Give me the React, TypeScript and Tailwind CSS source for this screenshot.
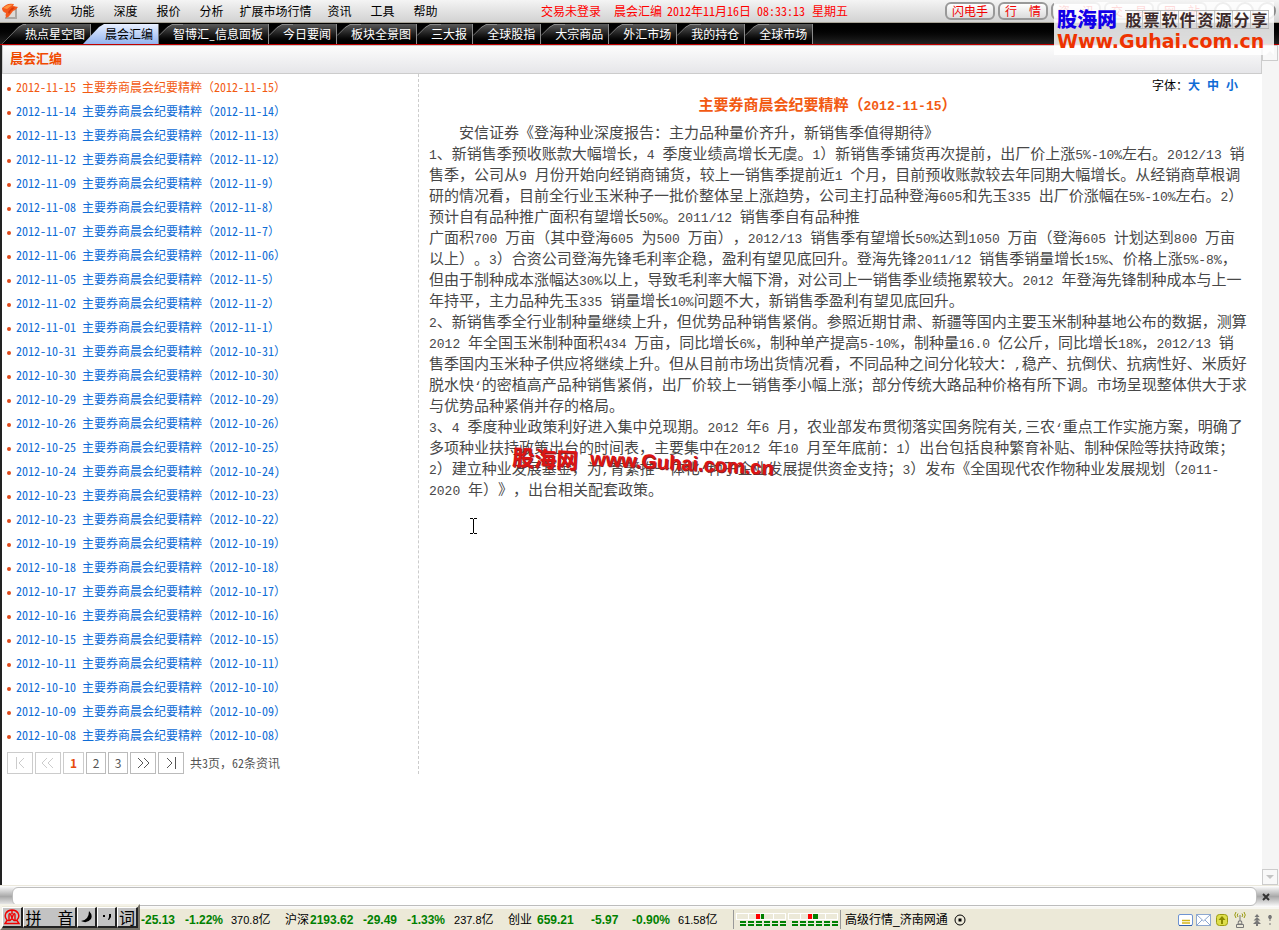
import React, { Fragment, useState } from "react";

const menus = ["系统", "功能", "深度", "报价", "分析", "扩展市场行情", "资讯", "工具", "帮助"];

const tabs = [
  "热点星空图",
  "晨会汇编",
  "智博汇_信息面板",
  "今日要闻",
  "板块全景图",
  "三大报",
  "全球股指",
  "大宗商品",
  "外汇市场",
  "我的持仓",
  "全球市场",
];

const news: [string, string][] = [
  ["2012-11-15", "（2012-11-15）"],
  ["2012-11-14", "（2012-11-14）"],
  ["2012-11-13", "（2012-11-13）"],
  ["2012-11-12", "（2012-11-12）"],
  ["2012-11-09", "（2012-11-9）"],
  ["2012-11-08", "（2012-11-8）"],
  ["2012-11-07", "（2012-11-7）"],
  ["2012-11-06", "（2012-11-06）"],
  ["2012-11-05", "（2012-11-5）"],
  ["2012-11-02", "（2012-11-2）"],
  ["2012-11-01", "（2012-11-1）"],
  ["2012-10-31", "（2012-10-31）"],
  ["2012-10-30", "（2012-10-30）"],
  ["2012-10-29", "（2012-10-29）"],
  ["2012-10-26", "（2012-10-26）"],
  ["2012-10-25", "（2012-10-25）"],
  ["2012-10-24", "（2012-10-24)"],
  ["2012-10-23", "（2012-10-23）"],
  ["2012-10-23", "（2012-10-22）"],
  ["2012-10-19", "（2012-10-19）"],
  ["2012-10-18", "（2012-10-18）"],
  ["2012-10-17", "（2012-10-17）"],
  ["2012-10-16", "（2012-10-16）"],
  ["2012-10-15", "（2012-10-15）"],
  ["2012-10-11", "（2012-10-11）"],
  ["2012-10-10", "（2012-10-10）"],
  ["2012-10-09", "（2012-10-09）"],
  ["2012-10-08", "（2012-10-08）"],
];

const article: string[][] = [
  ["　　安信证券《登海种业深度报告：主力品种量价齐升，新销售季值得期待》"],
  [
    "1、新销售季预收账款大幅增长，4 季度业绩高增长无虞。1）新销售季铺货再次提前，出厂价上涨5%-10%左右。2012/13 销",
    "售季，公司从9 月份开始向经销商铺货，较上一销售季提前近1 个月，目前预收账款较去年同期大幅增长。从经销商草根调",
    "研的情况看，目前全行业玉米种子一批价整体呈上涨趋势，公司主打品种登海605和先玉335 出厂价涨幅在5%-10%左右。2）",
    "预计自有品种推广面积有望增长50%。2011/12 销售季自有品种推",
    "广面积700 万亩（其中登海605 为500 万亩），2012/13 销售季有望增长50%达到1050 万亩（登海605 计划达到800 万亩",
    "以上）。3）合资公司登海先锋毛利率企稳，盈利有望见底回升。登海先锋2011/12 销售季销量增长15%、价格上涨5%-8%，",
    "但由于制种成本涨幅达30%以上，导致毛利率大幅下滑，对公司上一销售季业绩拖累较大。2012 年登海先锋制种成本与上一",
    "年持平，主力品种先玉335 销量增长10%问题不大，新销售季盈利有望见底回升。",
  ],
  [
    "2、新销售季全行业制种量继续上升，但优势品种销售紧俏。参照近期甘肃、新疆等国内主要玉米制种基地公布的数据，测算",
    "2012 年全国玉米制种面积434 万亩，同比增长6%，制种单产提高5-10%，制种量16.0 亿公斤，同比增长18%，2012/13 销",
    "售季国内玉米种子供应将继续上升。但从目前市场出货情况看，不同品种之间分化较大：,稳产、抗倒伏、抗病性好、米质好",
    "脱水快‘的密植高产品种销售紧俏，出厂价较上一销售季小幅上涨；部分传统大路品种价格有所下调。市场呈现整体供大于求",
    "与优势品种紧俏并存的格局。",
  ],
  [
    "3、4 季度种业政策利好进入集中兑现期。2012 年6 月，农业部发布贯彻落实国务院有关,三农‘重点工作实施方案，明确了",
    "多项种业扶持政策出台的时间表，主要集中在2012 年10 月至年底前：1）出台包括良种繁育补贴、制种保险等扶持政策；",
    "2）建立种业发展基金，为,育繁推一体化‘种子企业发展提供资金支持；3）发布《全国现代农作物种业发展规划（2011-",
    "2020 年）》，出台相关配套政策。",
  ],
];

/* Sets runs of half-width characters in their own face or glyph variant. */
function Runs({ text, className }: { text: string; className: string }) {
  return (
    <>
      {text.split(/([\x20-\x7e‘]+)/).map((part, i) =>
        i % 2 ? (
          <span key={i} className={className}>
            {part}
          </span>
        ) : (
          part
        ),
      )}
    </>
  );
}

function Mixed({ text }: { text: string }) {
  return <Runs text={text} className="font-['Liberation_Mono',monospace] text-[13px] leading-none" />;
}

function Half({ text }: { text: string }) {
  return <Runs text={text} className="[font-feature-settings:'hwid']" />;
}

function Logo() {
  return (
    <svg viewBox="0 0 16 16" className="h-4 w-4" aria-hidden="true">
      <rect x="3" y="4" width="12" height="12" fill="#a9a6a2" />
      <rect x="2" y="3" width="11" height="11" fill="#dedad6" />
      <path d="M0 5L4 2Q7 0 12 1L11 3L16 4Q14 7 11 8L8 12Q7 14 4 15Q3 12 4 10Q0 9 0 5Z" fill="#f4581c" />
      <path d="M1 5L5 2.500Q8 1 11 1.500L5 6Z" fill="#ff9340" />
      <path d="M6 9L10 4.500H13Q11 7 9 7.500L7 11Z" fill="#d83a08" />
    </svg>
  );
}

function Tab({ label, first, active, onClick }: { label: string; first: boolean; active: boolean; onClick: () => void }) {
  if (active) {
    return (
      <button
        onClick={onClick}
        className="relative z-10 -ml-2 h-5 border-r border-[#777] bg-linear-to-b from-[#e9f0ff] to-[#93b3ee] pr-[5px] pl-[22px] text-black [clip-path:polygon(0_100%,16px_3px,21px_0,100%_0,100%_100%)]"
      >
        {label}
      </button>
    );
  }
  return (
    <button
      onClick={onClick}
      className={
        first
          ? "relative h-5 border-r border-[#8a8a8a] bg-linear-to-b from-[#5c5c5c] to-black pr-[5px] pl-[23px] text-white [clip-path:polygon(0_100%,16px_3px,21px_0,100%_0,100%_100%)]"
          : "relative h-5 border-r border-[#8a8a8a] bg-linear-to-b from-[#5c5c5c] to-black pr-[5px] pl-[14px] text-white [clip-path:polygon(0_55%,8px_3px,13px_0,100%_0,100%_100%,0_100%)]"
      }
    >
      <svg className="absolute top-0 left-0 h-5 w-6" viewBox="0 0 24 20" fill="none" stroke="#8a8a8a" aria-hidden="true">
        <path d={first ? "M0 20L16 3.5L21 .5H24" : "M0 11.5L8 3.5L13 .5H24"} />
      </svg>
      <Half text={label} />
    </button>
  );
}

const pill =
  "flex h-[18px] w-[50px] items-center justify-center rounded-md border-2 border-[#999] bg-linear-to-b from-white to-[#dcdcdc] text-[#f00000]";

function TopBar() {
  return (
    <header className="flex h-[23px] items-center overflow-hidden border-b border-[#a8a498] bg-linear-to-b from-[#f4f4f4] to-[#d2d2d2]">
      <div className="w-[18px] shrink-0 pl-[2px]">
        <Logo />
      </div>
      <nav className="flex shrink-0">
        {menus.map((m) => (
          <button key={m} className={m.length > 2 ? "w-[85px]" : "w-[43px]"}>
            {m}
          </button>
        ))}
      </nav>
      <div className="ml-[94px] flex shrink-0 text-[#ff0000]">
        <span className="w-[73px]">交易未登录</span>
        <span className="w-[53px]">晨会汇编</span>
        <span className="w-[90px]">
          <Half text="2012年11月16日" />
        </span>
        <span className="w-[55px]">
          <Half text="08:33:13" />
        </span>
        <span>星期五</span>
      </div>
      <div className="ml-auto flex shrink-0 items-center gap-[3px] pr-[3px]">
        <button className={pill}>闪电手</button>
        <button className={pill}>行　情</button>
        <button className={pill}>资　讯</button>
        <button className={pill}>交　易</button>
        <button className={pill}>网　站</button>
        <span className="flex gap-1 pl-1">
          <button aria-label="最小化" className="size-[18px] rounded-full border-2 border-[#8c8c8c] bg-white" />
          <button aria-label="最大化" className="size-[18px] rounded-full border-2 border-[#8c8c8c] bg-white" />
          <button aria-label="关闭" className="size-[18px] rounded-full border-2 border-[#8c8c8c] bg-white" />
        </span>
      </div>
    </header>
  );
}

function SiteBanner() {
  return (
    <div className="absolute top-[2px] right-[5px] z-20 h-[53px] w-[220px] bg-white/85 pl-[3px] whitespace-nowrap">
      <div className="flex h-[30px] items-center pt-1">
        <span className="w-[68px] text-[20px] leading-6 font-black text-[#1200e8]">股海网</span>
        <span className="flex h-[19px] items-center border-y border-[#b5b5b5] text-[16px] leading-[17px] font-bold text-[#3c2a2a]">
          {"股票软件资源分享".split("").map((c, i) => (
            <span key={i} className="w-[18px] border-r border-[#c4c4c4] text-center">
              {c}
            </span>
          ))}
        </span>
      </div>
      <div className="font-['DejaVu_Sans',sans-serif] text-[19px] leading-[18px] font-bold text-[#ee3300]">Www.Guhai.com.cn</div>
    </div>
  );
}

const pageBtn = "flex h-[22px] items-center justify-center border border-[#bbb] text-[#555]";

function NewsList() {
  const [sel, setSel] = useState(0);
  return (
    <section className="w-[417px] shrink-0 border-r border-dashed border-[#ccc] pt-[1px]">
      <ul>
        {news.map(([date, suffix], i) => (
          <li key={i} className="flex h-6 items-center pl-1">
            <span className="mt-[3px] mr-[5px] ml-[1px] size-1 rounded-full bg-[#e04a1a]" />
            <a
              href="#article"
              onClick={() => setSel(i)}
              className={i === sel ? "whitespace-pre text-[#f25a12]" : "whitespace-pre text-[#0e6cd6]"}
            >
              <Half text={date + " 主要券商晨会纪要精粹" + suffix} />
            </a>
          </li>
        ))}
      </ul>
      <nav className="mt-[5px] flex h-[22px] items-center gap-[2px] pl-[5px]">
        <button className="flex h-[22px] w-[26px] items-center justify-center border border-[#ccc] text-[#ccc]" aria-label="首页">
          <PagerIcon d="M3.5 0V12M11 1L6 6L11 11" />
        </button>
        <button className="flex h-[22px] w-[26px] items-center justify-center border border-[#ccc] text-[#ccc]" aria-label="上一页">
          <PagerIcon d="M6 1L1 6L6 11M12 1L7 6L12 11" />
        </button>
        <button className="flex h-[22px] w-[21px] items-center justify-center border border-[#ccc] font-bold text-[#e84a0c]">1</button>
        <button className={pageBtn + " w-5"}>2</button>
        <button className={pageBtn + " w-5"}>3</button>
        <button className={pageBtn + " w-[26px]"} aria-label="下一页">
          <PagerIcon d="M2 1L7 6L2 11M8 1L13 6L8 11" />
        </button>
        <button className={pageBtn + " w-[26px]"} aria-label="末页">
          <PagerIcon d="M3 1L8 6L3 11M11.5 0V12" />
        </button>
        <span className="pl-1 text-[#555]">
          <Half text="共3页，62条资讯" />
        </span>
      </nav>
    </section>
  );
}

function PagerIcon({ d }: { d: string }) {
  return (
    <svg className="h-3 w-[14px]" viewBox="0 0 14 12" fill="none" stroke="currentColor" aria-hidden="true">
      <path d={d} />
    </svg>
  );
}

function Article() {
  return (
    <article id="article" className="relative min-w-0 flex-1 pl-[10px]">
      <div className="flex h-[21px] items-center justify-end pr-6">
        <span>字体：</span>
        <button className="w-[19px] text-left font-bold text-[#0e6cd6]">大</button>
        <button className="w-[19px] text-left font-bold text-[#0e6cd6]">中</button>
        <button className="font-bold text-[#0e6cd6]">小</button>
      </div>
      <h1 className="h-[26px] pr-9 text-center text-[15px] leading-[18px] font-bold text-[#f25a12]">
        <Mixed text="主要券商晨会纪要精粹（2012-11-15）" />
      </h1>
      <div className="text-[15px] leading-[21px] whitespace-pre text-[#484848]">
        {article.map((lines, i) => (
          <p key={i}>
            {lines.map((line, j) => (
              <Fragment key={j}>
                {j > 0 && <br />}
                <Mixed text={line} />
              </Fragment>
            ))}
          </p>
        ))}
      </div>
      <div className="absolute top-[371px] left-[93px] flex gap-3 font-bold whitespace-nowrap text-[#dc1414] [text-shadow:1px_1px_0_#8a2020]">
        <span className="rotate-3 text-[22px] leading-6">股海网</span>
        <span className="rotate-3 pt-1 font-['Liberation_Sans',sans-serif] text-[20px] leading-7">www.Guhai.com.cn</span>
      </div>
      <svg className="absolute top-[444px] left-[50px] h-4 w-[9px]" viewBox="0 0 9 16" stroke="#000" fill="none" aria-hidden="true">
        <path d="M1 .5H4M5 .5H8M4.5 1V15M1 15.5H4M5 15.5H8" />
      </svg>
    </article>
  );
}

function ScrollBar() {
  return (
    <div className="flex w-[17px] shrink-0 flex-col justify-between bg-[#f5f5f5] pr-[1px]">
      <button aria-label="向上滚动" className="flex h-4 items-center justify-center border border-[#ccc] bg-[#f8f8f8]">
        <svg viewBox="0 0 8 4" className="h-1 w-2" fill="#ccc" aria-hidden="true">
          <path d="M4 0L8 4H0Z" />
        </svg>
      </button>
      <button aria-label="向下滚动" className="flex h-4 items-center justify-center border border-[#ccc] bg-[#f8f8f8]">
        <svg viewBox="0 0 8 4" className="h-1 w-2" fill="#c4c4c4" aria-hidden="true">
          <path d="M0 0H8L4 4Z" />
        </svg>
      </button>
    </div>
  );
}

function MessageStrip() {
  return (
    <div className="flex h-[22px] items-center border-t border-[#ebe8dc] bg-linear-to-b from-white via-[#a8a8a8] to-white pr-[1px] pl-3">
      <input
        aria-label="消息"
        className="h-[19px] min-w-0 flex-1 rounded-md border border-[#bdbdbd] bg-white px-2 outline-none"
      />
      <button aria-label="关闭消息栏" className="flex w-[21px] items-center justify-center pr-1">
        <svg viewBox="0 0 8 8" className="size-2" stroke="#333" strokeWidth="2" aria-hidden="true">
          <path d="M1 1L7 7M7 1L1 7" />
        </svg>
      </button>
    </div>
  );
}

function Num({ children, className }: { children: string; className: string }) {
  return <span className={"shrink-0 text-[12px] font-bold text-[#008000] " + className}>{children}</span>;
}

function Amount({ value, className }: { value: string; className: string }) {
  return (
    <span className={"shrink-0 text-[12px] text-black " + className}>
      <span className="text-[11px]">{value}</span>亿
    </span>
  );
}

function Breadth({ red, green }: { red: number; green: number }) {
  return (
    <svg viewBox="0 0 50 14" className="h-[14px] w-[50px] shrink-0" aria-hidden="true" shapeRendering="crispEdges">
      <path d="M.5 .5H49.5V6.5H.5ZM12.5 0V7M37.5 0V7" fill="none" stroke="#fff" />
      <rect x="20" y="1" width={red} height="5" fill="#f00" />
      <rect x="25" y="1" width={green} height="5" fill="#008000" />
      <path d="M4 9H50M4 12H50" stroke="#008000" strokeWidth="2" strokeDasharray="6 2" />
    </svg>
  );
}

function StatusIcons() {
  return (
    <div className="ml-auto flex shrink-0 items-center pr-[7px]">
      <svg viewBox="0 0 15 12" className="mr-[3px] h-3 w-[15px]" aria-hidden="true">
        <rect x=".5" y=".5" width="14" height="11" rx="1.5" fill="#fff" stroke="#6f94d2" />
        <path d="M1 11.5H14" stroke="#315fae" />
        <path d="M4 6.5H12M4 9H12" stroke="#d3b51b" strokeWidth="1.4" />
      </svg>
      <svg viewBox="0 0 15 12" className="mr-[5px] h-3 w-[15px]" fill="#fff" stroke="#8ea8cf" aria-hidden="true">
        <rect x=".5" y=".5" width="14" height="11" />
        <path d="M1 1L7.5 7L14 1M1 11L6 6M14 11L9 6" fill="none" />
      </svg>
      <svg viewBox="0 0 12 12" className="mr-[6px] size-3" aria-hidden="true">
        <rect x=".5" y=".5" width="11" height="11" rx="3" fill="#dede4a" stroke="#9a9a10" />
        <path d="M6 2L9.5 6H7V10H5V6H2.500Z" fill="#8a8a00" />
      </svg>
      <svg viewBox="0 0 12 16" className="mr-[7px] h-4 w-3" fill="none" stroke="#9a9a10" aria-hidden="true">
        <path d="M2 0Q-.5 3 2 6M4 1.500Q2.500 3 4 5M10 0Q12.500 3 10 6M8 1.500Q9.500 3 8 5" />
        <path d="M6 3V9M4.500 9H7.500L8 12H4ZM2.500 12.500H9.500V15.500H2.500Z" stroke="#777" />
      </svg>
      <svg viewBox="0 0 8 12" className="mr-[7px] h-3 w-2" fill="#777" aria-hidden="true">
        <path d="M4 0L6.500 3H1.500ZM4 3L7.500 6.500H.5ZM4 6L8 10H0ZM3 10H5V12H3Z" />
      </svg>
      <svg viewBox="0 0 4 10" className="h-[10px] w-1" fill="#777" aria-hidden="true">
        <path d="M1 0H3L4 2L3 4H1L0 2ZM1.500 4H2.500V6H1.500ZM1.500 8H2.500V10H1.500Z" />
      </svg>
    </div>
  );
}

const key =
  "flex h-[21px] items-center justify-center border-t border-r-2 border-b-2 border-l border-t-white border-r-[#222] border-b-[#222] border-l-white bg-[#c3c3c3]";

function InputMethodBar() {
  return (
    <div className="absolute bottom-0 left-0 z-10 flex h-[26px] w-[140px] items-center border-2 border-t-[#f4f2e8] border-r-[#77746a] border-b-[#77746a] border-l-[#f4f2e8] bg-[#ece9d8] text-[16px] text-black">
      <button className={key + " w-[21px]"} aria-label="输入法">
        <svg viewBox="0 0 16 16" className="size-4" fill="none" stroke="#f00000" strokeWidth="1.4" aria-hidden="true">
          <path d="M3 11Q0 8 2 4Q4 1 8 1Q12 1 14 4Q16 8 13 11M5 11V6Q5 4 6.500 5L8 9L9.500 5Q11 4 11 6V11M8 1V5M1 14.500H15L13 11.500H10L8 9.500L6 11.500H3Z" />
        </svg>
      </button>
      <button className={key + " w-[54px]"}>拼　音</button>
      <button className={key + " w-5"} aria-label="半角">
        <svg viewBox="0 0 12 12" className="size-3" aria-hidden="true">
          <path d="M8 0Q12 4 10 8Q6 13 0 10Q8 9 8 0Z" fill="#000" />
        </svg>
      </button>
      <button className={key + " w-5"} aria-label="标点">
        <svg viewBox="0 0 10 6" className="h-[6px] w-[10px]" aria-hidden="true">
          <path d="M1 1H3V3H1ZM7 0H9V3L7 6H6L7 3Z" />
        </svg>
      </button>
      <button className={key + " w-[21px]"}>词</button>
    </div>
  );
}

function StatusBar() {
  return (
    <footer className="flex h-[23px] items-center border-t-2 border-[#f8f7f2] bg-[#ece9d8] pl-[141px] font-['Liberation_Sans','Noto_Sans_CJK_SC',sans-serif] whitespace-nowrap">
      <Num className="w-11">-25.13</Num>
      <Num className="w-[46px]">-1.22%</Num>
      <Amount className="w-[54px]" value="370.8" />
      <span>沪深</span>
      <Num className="w-[54px] pl-[1px]">2193.62</Num>
      <Num className="w-11">-29.49</Num>
      <Num className="w-[47px]">-1.33%</Num>
      <Amount className="w-[54px]" value="237.8" />
      <span className="w-[29px]">创业</span>
      <Num className="w-[54px]">659.21</Num>
      <Num className="w-[41px]">-5.97</Num>
      <Num className="w-[46px]">-0.90%</Num>
      <Amount className="w-[55px]" value="61.58" />
      <div className="flex h-[19px] shrink-0 items-center gap-[2px] border-x border-[#999] px-[2px]">
        <Breadth red={4} green={3} />
        <Breadth red={4} green={5} />
      </div>
      <span className="pr-[6px] pl-1">高级行情_济南网通</span>
      <svg viewBox="0 0 12 12" className="size-3 shrink-0" aria-hidden="true">
        <circle cx="6" cy="6" r="5" fill="none" stroke="#000" />
        <rect x="4.500" y="4.500" width="3" height="3" />
      </svg>
      <StatusIcons />
    </footer>
  );
}

export default function App() {
  const [active, setActive] = useState(1);
  return (
    <div
      lang="zh-CN"
      className="relative flex min-h-screen flex-col overflow-hidden bg-white font-['Noto_Sans_CJK_SC',sans-serif] text-[12px] leading-4 text-black [text-spacing-trim:space-all]"
    >
      <TopBar />
      <nav className="flex h-[22px] items-end border-b border-[#c00000] bg-linear-to-b from-black to-[#222] pl-[2px] whitespace-nowrap">
        {tabs.map((t, i) => (
          <Tab key={t} label={t} first={i === 0} active={i === active} onClick={() => setActive(i)} />
        ))}
      </nav>
      <SiteBanner />
      <div className="flex flex-1 border-l-2 border-[#222]">
        <main className="flex min-w-0 flex-1 flex-col">
          <h2 className="flex h-[29px] shrink-0 items-center border border-[#ccc] bg-linear-to-b from-[#fcfcfc] to-[#e6e6e9] pb-1 pl-[7px] text-[13px] font-bold text-[#f04a00]">
            晨会汇编
          </h2>
          <div className="flex">
            <NewsList />
            <Article />
          </div>
        </main>
        <ScrollBar />
      </div>
      <MessageStrip />
      <StatusBar />
      <InputMethodBar />
    </div>
  );
}
